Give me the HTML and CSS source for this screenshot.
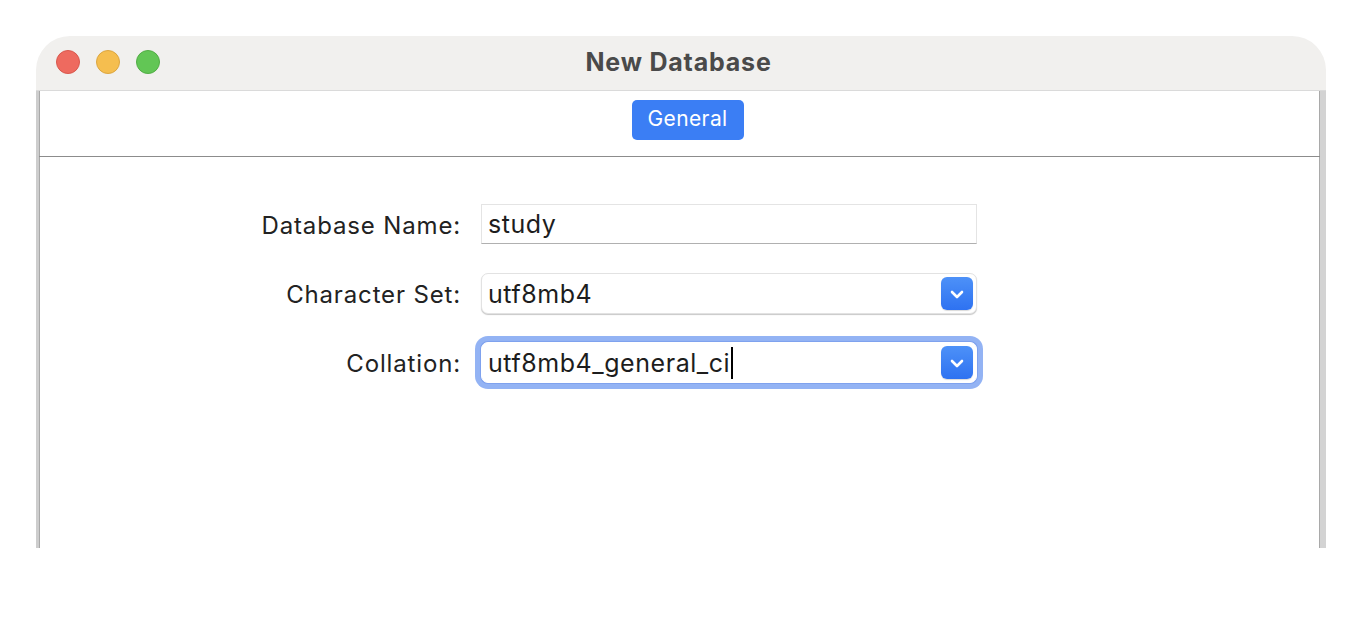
FILE: index.html
```html
<!DOCTYPE html>
<html>
<head>
<meta charset="utf-8">
<link rel="stylesheet" href="styles.css">
</head>
<body>
<div class="window">
  <div class="titlebar">
    <div class="lights">
      <span class="light red"></span>
      <span class="light yellow"></span>
      <span class="light green"></span>
    </div>
    <div class="title">New Database</div>
  </div>
  <div class="body">
    <div class="tabs">
      <div class="tab active">General</div>
    </div>
    <div class="form">
      <label class="label">Database Name:</label>
      <div class="field text">study</div>
      <label class="label">Character Set:</label>
      <div class="field popup">
        <span class="value">utf8mb4</span>
        <span class="arrow"><svg width="14" height="9" viewBox="0 0 14 9"><path d="M2 2 L7 7 L12 2" fill="none" stroke="#fff" stroke-width="2.6" stroke-linecap="round" stroke-linejoin="round"/></svg></span>
      </div>
      <label class="label">Collation:</label>
      <div class="field popup focused">
        <span class="value">utf8mb4_general_ci<span class="caret"></span></span>
        <span class="arrow"><svg width="14" height="9" viewBox="0 0 14 9"><path d="M2 2 L7 7 L12 2" fill="none" stroke="#fff" stroke-width="2.6" stroke-linecap="round" stroke-linejoin="round"/></svg></span>
      </div>
    </div>
  </div>
</div>
</body>
</html>
```

FILE: styles.css
```css
html, body {
  margin: 0;
  padding: 0;
  background: #ffffff;
}
body {
  font-family: Inter, "Liberation Sans", sans-serif;
  color: #1f1f1f;
}
.window {
  margin: 36px 0 0 36px;
  width: 1290px;
}
.titlebar {
  position: relative;
  height: 54px;
  background: #f1f0ee;
  border-radius: 34px 34px 0 0;
  border-bottom: 1px solid #dadada;
  display: flex;
  align-items: center;
  justify-content: center;
}
.lights {
  position: absolute;
  left: 20px;
  top: 14px;
  display: flex;
  gap: 16px;
}
.light {
  width: 24px;
  height: 24px;
  border-radius: 50%;
  box-sizing: border-box;
}
.red { background: #ee6a5f; border: 1px solid #d9584d; }
.yellow { background: #f5be4f; border: 1px solid #dca640; }
.green { background: #62c655; border: 1px solid #52ad45; }
.title {
  font-weight: 700;
  font-size: 25px;
  color: #4a4a4a;
  letter-spacing: 0.8px;
  margin-left: -5px;
  padding-bottom: 3px;
}
.body {
  height: 457px;
  background: #ffffff;
  border-left: 3px solid #cdcdcd;
  border-right: 6px solid #d3d3d3;
  box-shadow: inset 1px 0 0 #a9a9a9, inset -1px 0 0 #a9a9a9;
}
.tabs {
  height: 66px;
  border-bottom: 1px solid #8c8c8c;
  display: flex;
  justify-content: center;
  align-items: flex-start;
  padding-top: 9px;
  box-sizing: border-box;
}
.tab {
  width: 112px;
  height: 40px;
  border-radius: 5px;
  background: #3b7ef4;
  color: #ffffff;
  font-size: 21px;
  letter-spacing: 0.4px;
  display: flex;
  align-items: center;
  justify-content: center;
  margin-left: 16px;
  padding-bottom: 4px;
  box-sizing: border-box;
}
.form {
  display: grid;
  grid-template-columns: 200px 496px;
  column-gap: 20px;
  row-gap: 28px;
  grid-auto-rows: 41px;
  margin: 47px 0 0 222px;
}
.label {
  font-size: 24px;
  text-align: right;
  align-self: center;
  color: #222222;
  letter-spacing: 0.85px;
  white-space: nowrap;
  padding-top: 2px;
}
.field {
  box-sizing: border-box;
  font-size: 25px;
  color: #1d1d1d;
  display: flex;
  align-items: center;
  padding-left: 6px;
  background: #ffffff;
  letter-spacing: 0.55px;
}
.text {
  height: 40px;
  border: 1px solid #e4e4e4;
  border-bottom: 1px solid #b0b0b0;
}
.popup {
  position: relative;
  border: 1px solid #e2e2e2;
  border-radius: 7px;
  box-shadow: 0 1px 1px rgba(0, 0, 0, 0.22);
}
.popup .value {
  flex: 1;
  display: flex;
  align-items: center;
}
.arrow {
  position: absolute;
  right: 3px;
  top: 3px;
  width: 32px;
  height: 33px;
  border-radius: 6px;
  background: linear-gradient(#4d91f8, #2e72f1);
  display: flex;
  align-items: center;
  justify-content: center;
  box-shadow: 0 1px 1px rgba(0, 0, 0, 0.15);
}
.arrow svg {
  margin-top: 1px;
}
.focused {
  border-color: #ffffff;
  box-shadow: 0 0 0 1px #7fa2ee, 0 0 0 6px #93b3f4;
}
.caret {
  display: inline-block;
  width: 2px;
  height: 32px;
  background: #000000;
  margin-left: 1px;
}
```
